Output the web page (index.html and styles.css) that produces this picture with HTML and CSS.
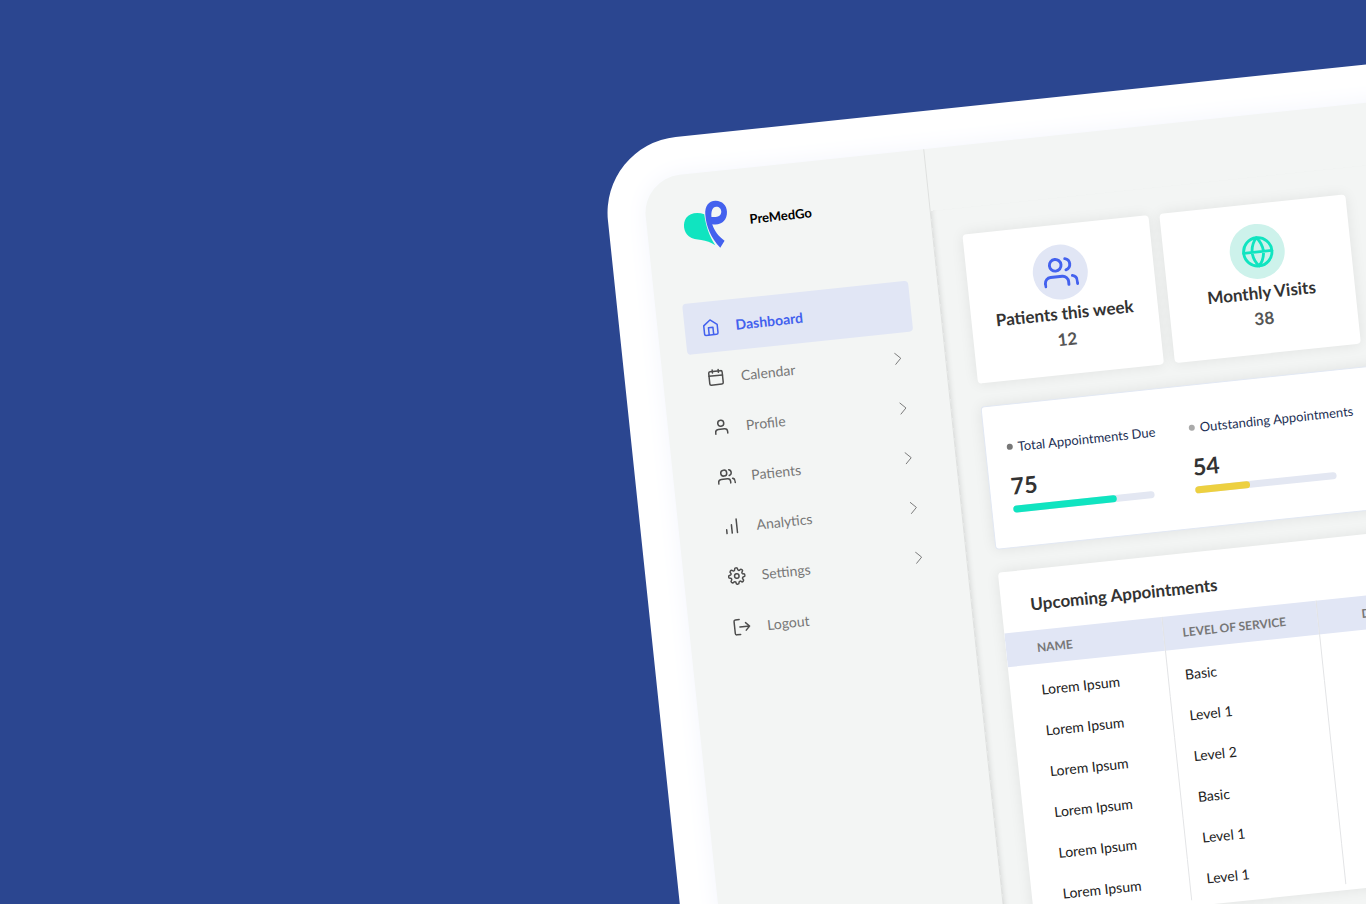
FILE: index.html
```html
<!DOCTYPE html>
<html lang="en">
<head>
<meta charset="utf-8">
<meta name="viewport" content="width=device-width, initial-scale=1">
<title>PreMedGo</title>
<link rel="stylesheet" href="styles.css">
</head>
<body>
<svg class="sprite" width="0" height="0" aria-hidden="true">
  <symbol id="i-users" viewBox="0 0 24 24"><path d="M17 21v-2a4 4 0 0 0-4-4H5a4 4 0 0 0-4 4v2"/><circle cx="9" cy="7" r="4"/><path d="M23 21v-2a4 4 0 0 0-3-3.87M16 3.13a4 4 0 0 1 0 7.75"/></symbol>
  <symbol id="i-chevron" viewBox="0 0 8 14"><path d="M1 1l6 6-6 6"/></symbol>
</svg>
<main class="hero">
  <div class="device">
    <div class="screen">
      <aside class="sidebar">
        <a class="brand" href="#">
          <svg class="logo" viewBox="0 0 60 62" aria-hidden="true">
            <path fill="#10e4c0" d="M28.500 22C22 19.500 14 20.500 10.500 25.500 6.500 31.500 8 40 13 44c3.500 2.800 8 3 12.500 3.700 5 .8 9.500 2.300 14 5.300C33.500 44 30 33.500 28.500 22z"/>
            <path fill="#4361ee" fill-rule="evenodd" d="M40 8.500c-7-.2-11 5.500-10.500 13.500C30.300 34 35 45.500 44.500 55.500l4.300-7.200C43 44 38.500 38.500 36.500 31.800 45 33.500 51.500 28.500 51.200 19.500 51 13 46.500 8.700 40 8.500zM40.500 14.500c3 0 5 2 5 5s-2.300 5.200-5.500 5.200h-4.300c-.5-5.700 1-10.200 4.800-10.200z"/>
          </svg>
          <span>PreMedGo</span>
        </a>
        <nav class="nav">
          <a class="nav-item active" href="#"><svg class="icon" viewBox="0 0 24 24"><path d="M3 9l9-7 9 7v11a2 2 0 0 1-2 2H5a2 2 0 0 1-2-2zM9 22V12h6v10"/></svg><span>Dashboard</span></a>
          <a class="nav-item" href="#"><svg class="icon" viewBox="0 0 24 24"><rect x="3" y="4" width="18" height="18" rx="2"/><path d="M16 2v4M8 2v4M3 10h18"/></svg><span>Calendar</span><svg class="chevron"><use href="#i-chevron"/></svg></a>
          <a class="nav-item" href="#"><svg class="icon" viewBox="0 0 24 24"><path d="M20 21v-2a4 4 0 0 0-4-4H8a4 4 0 0 0-4 4v2"/><circle cx="12" cy="7" r="4"/></svg><span>Profile</span><svg class="chevron"><use href="#i-chevron"/></svg></a>
          <a class="nav-item" href="#"><svg class="icon"><use href="#i-users"/></svg><span>Patients</span><svg class="chevron"><use href="#i-chevron"/></svg></a>
          <a class="nav-item" href="#"><svg class="icon" viewBox="0 0 24 24"><path d="M19 21V3M12 21V10M5 21v-5"/></svg><span>Analytics</span><svg class="chevron"><use href="#i-chevron"/></svg></a>
          <a class="nav-item" href="#"><svg class="icon" viewBox="0 0 24 24"><circle cx="12" cy="12" r="3"/><path d="M19.400 15a1.650 1.650 0 0 0 .33 1.820l.06.06a2 2 0 0 1-2.830 2.830l-.06-.06a1.650 1.650 0 0 0-1.820-.33 1.650 1.650 0 0 0-1 1.510V21a2 2 0 0 1-4 0v-.09A1.650 1.650 0 0 0 9 19.400a1.650 1.650 0 0 0-1.820.33l-.06.06a2 2 0 0 1-2.830-2.830l.06-.06a1.650 1.650 0 0 0 .33-1.820 1.650 1.650 0 0 0-1.510-1H3a2 2 0 0 1 0-4h.09A1.650 1.650 0 0 0 4.600 9a1.650 1.650 0 0 0-.33-1.820l-.06-.06a2 2 0 0 1 2.830-2.830l.06.06a1.650 1.650 0 0 0 1.820.33H9a1.650 1.650 0 0 0 1-1.510V3a2 2 0 0 1 4 0v.09a1.650 1.650 0 0 0 1 1.510 1.650 1.650 0 0 0 1.820-.33l.06-.06a2 2 0 0 1 2.830 2.830l-.06.06a1.650 1.650 0 0 0-.33 1.820V9a1.650 1.650 0 0 0 1.510 1H21a2 2 0 0 1 0 4h-.09a1.650 1.650 0 0 0-1.510 1z"/></svg><span>Settings</span><svg class="chevron"><use href="#i-chevron"/></svg></a>
          <a class="nav-item" href="#"><svg class="icon" viewBox="0 0 24 24"><path d="M9 22H4a2 2 0 0 1-2-2V4a2 2 0 0 1 2-2h5M17 17l5-5-5-5M22 12H9"/></svg><span>Logout</span></a>
        </nav>
      </aside>
      <div class="main">
        <div class="topbar"></div>
        <div class="content">
          <section class="tiles">
            <article class="card tile">
              <div class="badge badge-blue"><svg><use href="#i-users"/></svg></div>
              <h2>Patients this week</h2>
              <p>12</p>
            </article>
            <article class="card tile">
              <div class="badge badge-teal"><svg viewBox="0 0 24 24"><circle cx="12" cy="12" r="10"/><path d="M2 12h20M12 2a15.300 15.300 0 0 1 4 10 15.300 15.300 0 0 1-4 10 15.300 15.300 0 0 1-4-10 15.300 15.300 0 0 1 4-10z"/></svg></div>
              <h2>Monthly Visits</h2>
              <p>38</p>
            </article>
          </section>
          <section class="card stats">
            <div class="stat">
              <h3 class="dark-dot">Total Appointments Due</h3>
              <strong>75</strong>
              <div class="track"><div class="fill teal" style="width:73%"></div></div>
            </div>
            <div class="stat">
              <h3>Outstanding Appointments</h3>
              <strong>54</strong>
              <div class="track"><div class="fill yellow" style="width:39%"></div></div>
            </div>
          </section>
          <section class="card appointments">
            <h2>Upcoming Appointments</h2>
            <table>
              <thead><tr><th>NAME</th><th>LEVEL OF SERVICE</th><th>DATE</th></tr></thead>
              <tbody>
                <tr><td>Lorem Ipsum</td><td>Basic</td><td></td></tr>
                <tr><td>Lorem Ipsum</td><td>Level 1</td><td></td></tr>
                <tr><td>Lorem Ipsum</td><td>Level 2</td><td></td></tr>
                <tr><td>Lorem Ipsum</td><td>Basic</td><td></td></tr>
                <tr><td>Lorem Ipsum</td><td>Level 1</td><td></td></tr>
                <tr><td>Lorem Ipsum</td><td>Level 1</td><td></td></tr>
              </tbody>
            </table>
          </section>
        </div>
      </div>
    </div>
  </div>
</main>
</body>
</html>
```
FILE: styles.css
```css
* { box-sizing: border-box; }

body {
  margin: 0;
  background: #2b4690;
  color: #333;
  font-family: Lato, "Open Sans", sans-serif;
  font-size: 14px;
}

h2, h3, p { margin: 0; }
a { color: inherit; text-decoration: none; }
.sprite { display: block; }

svg {
  fill: none;
  stroke: currentColor;
  stroke-width: 2;
  stroke-linecap: round;
  stroke-linejoin: round;
}

.hero {
  height: 100vh;
  overflow: hidden;
  padding: 145px 0 0 calc(50% - 83px);
}

/* tilted tablet running off the right and bottom edges */
.device {
  width: 100vw;
  padding: 38px;
  border-radius: 76px;
  background: #fff;
  transform: rotate(-6deg);
  transform-origin: 0 0;
}

.screen {
  display: flex;
  min-height: 110vh;
  border-radius: 38px;
  background: #f3f5f4;
  box-shadow: 0 0 24px #f3f5fc;
}

/* sidebar */
.sidebar {
  flex: 0 0 284px;
  padding: 20px 29px 26px 27px;
  border-right: 1px solid #dfe1e0;
}

.brand {
  display: flex;
  align-items: center;
  gap: 14px;
  height: 62px;
  margin-bottom: 47px;
  padding-left: 2px;
  color: #000;
  font-size: 13px;
  font-weight: 700;
}

.logo {
  width: 60px;
  height: 62px;
  stroke: none;
  transform: rotate(6deg);
}

.nav { display: flex; flex-direction: column; }

.nav-item {
  display: flex;
  align-items: center;
  gap: 16px;
  height: 50px;
  padding: 0 14px 0 17px;
  color: #777;
}

.nav-item .icon { width: 18px; height: 18px; color: #4d4d4d; }

.nav-item.active {
  height: 51px;
  border-radius: 4px;
  background: #e1e6f5;
  color: #4361ee;
  font-weight: 700;
}

.nav-item.active .icon { color: #4361ee; }

.nav-item:last-child { margin-top: 1px; }

.nav-item .chevron {
  width: 8px;
  height: 13px;
  margin-left: auto;
  stroke-width: 1;
}

/* main area */
.main { flex: 1; display: flex; flex-direction: column; }
.topbar { height: 62px; }

.content {
  flex: 1;
  display: flex;
  flex-direction: column;
  gap: 23px;
  padding: 27px 29px;
  box-shadow: inset 5px 0 5px -4px #d8dad9;
}

.card {
  border-radius: 4px;
  background: #fff;
  box-shadow: 0 0 14px rgba(0, 0, 0, 0.08);
}

.tiles { display: flex; gap: 11px; }

.tile {
  display: flex;
  flex-direction: column;
  align-items: center;
  width: 187px;
  height: 150px;
  padding-top: 20px;
}

.tile h2 { margin-top: 2px; font-size: 17px; line-height: 24px; }

.tile p {
  margin-top: 2px;
  color: #555;
  font-size: 17px;
  font-weight: 700;
  line-height: 24px;
}

.badge {
  display: grid;
  place-items: center;
  width: 55px;
  height: 55px;
  border-radius: 50%;
}

.badge svg { width: 35px; height: 35px; }
.badge-blue { background: #e1e6f5; color: #4361ee; }
.badge-teal { background: #cdf2eb; color: #10e4c0; }
.badge-teal svg { width: 34px; height: 34px; }

.stats {
  display: flex;
  gap: 20px;
  height: 144px;
  padding: 32px 21px;
  border: 1px solid #e2e8f3;
}

.stat { width: 163px; }

.stat h3 {
  display: flex;
  align-items: center;
  gap: 5px;
  color: #1c2f54;
  font-size: 13px;
  font-weight: 400;
  line-height: 20px;
  white-space: nowrap;
}

.stat h3::before {
  content: "";
  flex: none;
  width: 6px;
  height: 6px;
  border-radius: 50%;
  background: #aaa;
}

.stat h3.dark-dot::before { background: #777; }

.stat strong {
  display: block;
  margin-top: 13px;
  font-size: 23px;
  line-height: 32px;
}

.track {
  width: 142px;
  height: 7px;
  margin-top: 4px;
  border-radius: 4px;
  background: #e3e7f2;
}

.fill { height: 7px; border-radius: 4px; }
.teal { background: #10e4c0; }
.yellow { background: #edd040; }

.appointments { overflow: hidden; padding-bottom: 6px; }

.appointments h2 {
  padding: 22px 29px 14px;
  font-size: 17px;
  line-height: 25px;
}

table { width: 100%; border-collapse: collapse; table-layout: fixed; }
th, td { padding: 0 17px; text-align: left; }
th + th, td + td { border-left: 1px solid #e3e4e6; }
th:first-child, td:first-child { width: 158px; padding-left: 31px; }
th:nth-child(2) { width: 155px; padding-left: 19px; }
th:nth-child(3), td:nth-child(3) { padding-left: 44px; }

th {
  height: 34px;
  background: #e1e6f5;
  color: #777;
  font-size: 12px;
}

td { height: 41px; color: #222; }
tr:first-child td { height: 46px; padding-top: 5px; }
```
